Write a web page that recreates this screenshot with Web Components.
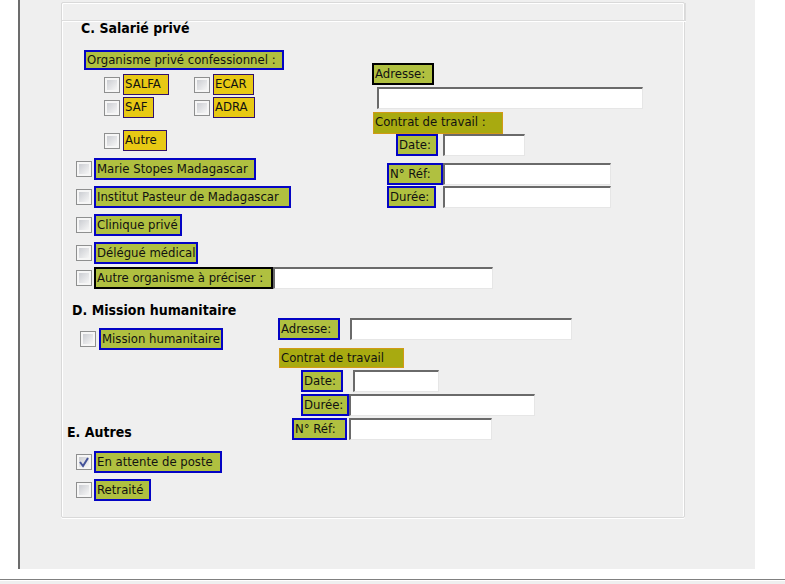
<!DOCTYPE html>
<html lang="fr">
<head>
<meta charset="utf-8">
<title>Situation professionnelle</title>
<style>
html { background: #fff; }
body { margin: 0; font: 13px/18px "DejaVu Sans Condensed", "DejaVu Sans", sans-serif; color: #111; }
</style>
</head>
<body>
<survey-form></survey-form>

<template id="t-title">
<style>
:host { display: block; }
h2 { margin: 0; font-size: 14px; line-height: 14px; font-weight: bold; color: #000; white-space: nowrap; }
</style>
<h2><slot></slot></h2>
</template>

<template id="t-caption">
<style>
:host { display: block; box-sizing: border-box; width: var(--w); background: #a8aa10; border: 1px solid #d19a16; padding: 0 1px; height: 22px; white-space: nowrap; }
:host([kind="green"]) { background: #b0c040; border: 2px solid #0404c4; padding: 0 1px; height: 20px; line-height: 16px; }
</style>
<slot></slot>
</template>

<template id="t-check">
<style>
:host { display: flex; align-items: flex-start; gap: 2px; }
.box { display: grid; flex: none; }
input { appearance: none; box-sizing: border-box; grid-area: 1 / 1; width: 16px; height: 16px; margin: 3px 0 0; padding: 2px; border: 1px solid #8e8f8f; background: linear-gradient(135deg, #cbcdd2, #f6f6f6) content-box, #f6f6f6; }
svg { display: none; grid-area: 1 / 1; width: 16px; height: 16px; margin-top: 3px; z-index: 1; pointer-events: none; }
input:checked + svg { display: block; }
label { box-sizing: border-box; width: var(--w); height: 22px; padding: 0 1px; border: 2px solid #0404c4; background: #b0c040; white-space: nowrap; }
:host([kind="tag"]) { gap: 3px; }
:host([kind="tag"]) label { height: 21px; border: 1px solid #30106c; background: #e8c914; }
:host([kind="dark"]) label { border-color: #000; }
:host([kind="mission"]) { gap: 3px; }
</style>
<span class="box"><input type="checkbox" id="c"><svg viewBox="0 0 16 16"><path d="M4 8 L7 12 L12 4" fill="none" stroke="#44539a" stroke-width="2"/></svg></span>
<label for="c"><slot></slot></label>
</template>

<template id="t-field">
<style>
:host { display: flex; gap: var(--g, 0px); }
:host([stacked]) { flex-direction: column; gap: 2px; }
label { box-sizing: border-box; flex: none; width: var(--w); height: 22px; padding: 0 1px; border: 2px solid #0404c4; background: #b0c040; white-space: nowrap; }
:host([kind="dark"]) label { border-color: #000; }
:host([stacked]) input { margin-left: 5px; }
input { box-sizing: border-box; width: var(--iw); height: 22px; margin: 0; padding: 0 2px; border: solid; border-width: 2px 1px 1px 2px; border-color: #6a6a6a #e6e6e6 #e6e6e6 #6a6a6a; background: #fff; font: inherit; color: inherit; border-radius: 0; }
</style>
<label for="f"><slot></slot></label><input type="text" id="f">
</template>

<template id="t-box">
<style>
:host { display: block; margin: 0 30px 0 18px; padding: 2px 70px 51px 41px; border-left: 2px solid #6c6c6c; background: #efefef; }
.frame { box-sizing: border-box; border: 1px solid #d9d9d9; border-radius: 2px; box-shadow: inset 1px 1px #fff, inset -1px 0 #fff, 0 1px #fff; padding-bottom: 16px; }
.strip { height: 17px; border-bottom: 1px solid #dcdcdc; box-shadow: 0 1px #fff; margin-right: -2px; border-right: 1px solid #dcdcdc; }
</style>
<div class="frame"><div class="strip"></div><slot></slot></div>
</template>

<template id="t-form">
<style>
:host { display: block; }
.cols { display: grid; }
.c { grid-template-columns: 310px 1fr; margin-top: 15px; }
.d { grid-template-columns: 216px 1fr; margin-top: 14px; }
.tags { display: grid; grid-template-columns: 90px 1fr; row-gap: 2px; margin: 4px 0 0 42px; }
.wide { grid-column: 1 / -1; margin-top: 10px; }
.list { display: grid; gap: 6px; margin: 7px 0 0 14px; }
.other { display: flex; margin: 3px 0 0 14px; align-items: flex-start; }
.other input { box-sizing: border-box; width: 220px; height: 22px; margin: 0; border: solid; border-width: 2px 1px 1px 2px; border-color: #6a6a6a #e6e6e6 #e6e6e6 #6a6a6a; background: #fff; font: inherit; }
.foot { margin-top: 10px; border-top: 1px solid #808080; box-shadow: inset 0 1px #fff; height: 4px; background: #efefef; }
</style>
<group-box>
  <section-title style="margin-left:19px">C. Salarié privé</section-title>
  <div class="cols c">
    <div>
      <caption-box kind="green" style="--w:200px;margin-left:22px">Organisme privé confessionnel :</caption-box>
      <div class="tags">
        <check-item kind="tag" style="--w:46px">SALFA</check-item>
        <check-item kind="tag" style="--w:41px">ECAR</check-item>
        <check-item kind="tag" style="--w:31px">SAF</check-item>
        <check-item kind="tag" style="--w:42px">ADRA</check-item>
        <check-item kind="tag" class="wide" style="--w:44px">Autre</check-item>
      </div>
      <div class="list">
        <check-item style="--w:162px">Marie Stopes Madagascar</check-item>
        <check-item style="--w:197px">Institut Pasteur de Madagascar</check-item>
        <check-item style="--w:88px">Clinique privé</check-item>
        <check-item style="--w:104px">Délégué médical</check-item>
      </div>
    </div>
    <div style="padding-top:13px">
      <text-field stacked kind="dark" style="--w:62px;--iw:266px">Adresse:</text-field>
      <caption-box style="--w:130px;margin:3px 0 0 1px">Contrat de travail :</caption-box>
      <text-field style="--w:42px;--g:5px;--iw:82px;margin-left:24px">Date:</text-field>
      <text-field style="--w:56px;--iw:168px;margin:7px 0 0 15px">N° Réf:</text-field>
      <text-field style="--w:49px;--g:7px;--iw:168px;margin:1px 0 0 15px">Durée:</text-field>
    </div>
  </div>
  <div class="other">
    <check-item kind="dark" style="--w:179px">Autre organisme à préciser :</check-item>
    <input type="text" aria-label="Autre organisme à préciser">
  </div>
  <div class="cols d">
    <div>
      <section-title style="margin-left:10px">D. Mission humanitaire</section-title>
      <check-item kind="mission" style="--w:124px;margin:11px 0 0 18px">Mission humanitaire</check-item>
      <section-title style="margin:75px 0 0 5px">E. Autres</section-title>
    </div>
    <div style="padding-top:15px">
      <text-field style="--w:62px;--g:10px;--iw:222px">Adresse:</text-field>
      <caption-box style="--w:125px;height:20px;margin:8px 0 0 1px">Contrat de travail</caption-box>
      <text-field style="--w:42px;--g:10px;--iw:86px;margin:2px 0 0 23px">Date:</text-field>
      <text-field style="--w:48px;--iw:186px;margin:2px 0 0 23px">Durée:</text-field>
      <text-field style="--w:55px;--g:2px;--iw:143px;margin:2px 0 0 14px">N° Réf:</text-field>
    </div>
  </div>
  <div class="list" style="margin-top:11px">
    <check-item checked style="--w:128px">En attente de poste</check-item>
    <check-item style="--w:57px">Retraité</check-item>
  </div>
</group-box>
<div class="foot"></div>
</template>

<script>
const base = id => class extends HTMLElement {
  constructor() {
    super();
    this.attachShadow({ mode: "open" }).append(document.getElementById(id).content.cloneNode(true));
  }
};
customElements.define("section-title", class extends base("t-title") {});
customElements.define("caption-box", class extends base("t-caption") {});
customElements.define("text-field", class extends base("t-field") {});
customElements.define("group-box", class extends base("t-box") {});
customElements.define("check-item", class extends base("t-check") {
  connectedCallback() {
    this.shadowRoot.querySelector("input").checked = this.hasAttribute("checked");
  }
});
customElements.define("survey-form", class extends base("t-form") {});
</script>
</body>
</html>
